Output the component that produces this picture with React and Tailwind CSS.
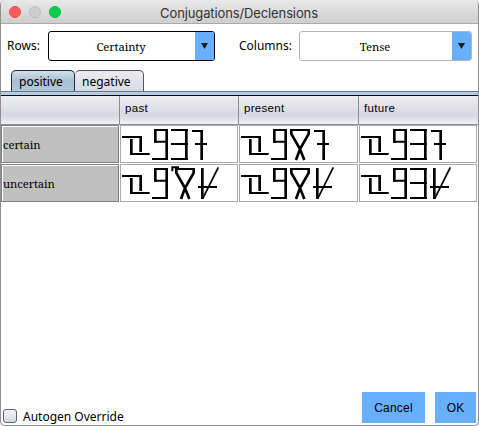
import React from 'react';

// Glyphs are drawn at three units per pixel, relative to their cell.
function Stem() {
  return (
    <g>
      <path d="M6 36H66M30 87H89" strokeWidth="6" />
      <path d="M34 42V90M62 33V81" strokeWidth="8" />
    </g>
  );
}
function Nine() {
  return (
    <g>
      <path d="M102 15H144M102 50H144M96 102H144" strokeWidth="6" />
      <path d="M106 12V53M140 12V105" strokeWidth="8" />
    </g>
  );
}
function Three() {
  return (
    <g>
      <path d="M153 15H204M153 57H204M153 102H204" strokeWidth="6" />
      <path d="M199 12V105" strokeWidth="8" />
    </g>
  );
}
function Ex({ x }) {
  return (
    <g transform={`translate(${x} 0)`}>
      <path d="M0 15H60" strokeWidth="6" />
      <path d="M4 13V27L30 72L43 105M56 13V27L30 72L18 105" strokeWidth="8" />
    </g>
  );
}
function Seven({ x }) {
  return (
    <g transform={`translate(${x} 0)`}>
      <path d="M-29 18H4M-20 57H16" strokeWidth="6" />
      <path d="M0 15V105" strokeWidth="8" />
    </g>
  );
}
function Slash({ x }) {
  return (
    <g transform={`translate(${x} 0)`}>
      <path d="M0 12V105" strokeWidth="8" />
      <path d="M-13 69H44" strokeWidth="6" />
      <path d="M1 104L48 10" strokeWidth="5" />
    </g>
  );
}

function Cell({ children }) {
  return (
    <div className="h-[38px] border border-[#aaaaaa] bg-white">
      <svg viewBox="3 3 348 108" preserveAspectRatio="xMinYMin meet" className="block h-9 w-[116px]" fill="none" stroke="#000">
        <Stem />
        <Nine />
        {children}
      </svg>
    </div>
  );
}

function RowHead({ children }) {
  return (
    <div className="flex h-[38px] items-center border border-[#808080] bg-[#c0c0c0] pt-[3px] pl-px font-['Noto_Serif','DejaVu_Serif',serif] text-[11.3px] tracking-[-0.1px] shadow-[inset_1px_1px_0_#fff]">
      {children}
    </div>
  );
}

function Combo({ children, className, arrow }) {
  return (
    <div className={`flex h-[30px] overflow-hidden rounded-[3px] border bg-white ${className}`}>
      <div className="flex-1 pt-[8px] pr-[2px] text-center font-['Noto_Serif','DejaVu_Serif',serif] text-[11.3px] leading-[14px] tracking-[-0.1px]">
        {children}
      </div>
      <div className={`flex items-center justify-center bg-[#66b0ff] ${arrow}`}>
        <svg width="7" height="6" viewBox="0 0 7 6"><path d="M0 0H7L3.5 6Z" fill="#1b1b1b" /></svg>
      </div>
    </div>
  );
}

function Header({ children }) {
  return <div className="border-l border-[#8a8d92] pt-[5px] pl-[5px]">{children}</div>;
}

export default function App() {
  return (
    <div className="h-[426px] w-[479px] bg-[#f2f2f2] text-black">
      <div className="flex h-full flex-col overflow-hidden rounded-[5px] border-b border-l border-r border-[#8f8f8f] bg-white font-['Noto_Sans',sans-serif] text-[12px]">
        <div className="grid h-6 shrink-0 grid-cols-[60px_1fr_60px] border-b border-[#acacac] bg-linear-to-b from-[#e9e9e9] to-[#cecece] pt-px">
          <div className="flex items-center gap-2 pl-2">
            <i className="size-3 rounded-full border border-[#ed4d4c] bg-[#ff5b59]" />
            <i className="size-3 rounded-full border border-[#bcbcbc] bg-[#cecece]" />
            <i className="size-3 rounded-full border border-[#09b943] bg-[#0ace4d]" />
          </div>
          <div className="pt-[3px] pr-px text-center font-[Inter] text-[13px] leading-[18px] tracking-[-0.12px] whitespace-nowrap text-[#333]">
            Conjugations/Declensions
          </div>
        </div>

        <div className="flex h-[46px] shrink-0 pt-[7px]">
          <div className="w-[47px] pt-[7px] pl-[6px] leading-4">Rows:</div>
          <Combo className="w-[167px] border-black" arrow="w-[19px]">Certainty</Combo>
          <div className="w-[84px] pt-[7px] pl-[24px] leading-4">Columns:</div>
          <Combo className="w-[173px] border-[#b5b5b5]" arrow="w-[19px]">Tense</Combo>
        </div>

        <div className="flex h-[21px] shrink-0 pl-[10px]">
          <div className="w-[64px] rounded-t-[5px] border border-b-0 border-[#202f45] bg-linear-to-b from-[#d3e0e9] via-[#a9c0d1] to-[#b2c9da] pt-[3px] pl-[7px] leading-4">
            positive
          </div>
          <div className="w-[69px] rounded-t-[5px] border border-b-0 border-l-0 border-[#4d5360] bg-linear-to-b from-[#ececef] to-[#d9dbe1] pt-[3px] pl-[7px] leading-4">
            negative
          </div>
        </div>
        <div className="h-[5px] shrink-0 border-t border-b border-t-[#66788a] border-b-[#050b1d] bg-[#b5cee1]" />

        <div className="grid h-[29px] shrink-0 grid-cols-[118px_119px_120px_120px] border-b border-[#8a929c] bg-linear-to-b from-[#eeeef1] via-[#d7d9e0] via-70% to-[#edf2fb] font-['Liberation_Sans',sans-serif] text-[11.5px] leading-[14px] tracking-[0.3px]">
          <div />
          <Header>past</Header>
          <Header>present</Header>
          <Header>future</Header>
        </div>

        <div className="grid shrink-0 grid-cols-[118px_118px_119px_118px] gap-x-px gap-y-px">
          <RowHead>certain</RowHead>
          <Cell><Three /><Seven x={245} /></Cell>
          <Cell><Ex x={153} /><Seven x={254} /></Cell>
          <Cell><Three /><Seven x={245} /></Cell>
          <RowHead>uncertain</RowHead>
          <Cell>
            <path d="M157 22V10H177" strokeWidth="6" />
            <Ex x={165} />
            <Slash x={247} />
          </Cell>
          <Cell><Ex x={153} /><Slash x={235} /></Cell>
          <Cell><Three /><Slash x={226} /></Cell>
        </div>

        <div className="mt-auto flex h-[33px] shrink-0 pr-[2px]">
          <div className="mt-[17px] ml-[2px] size-[14px] rounded-[3px] border border-[#5f636b] bg-linear-to-b from-[#f5f5f8] to-[#d6d8df]" />
          <div className="h-[33px] pt-[17px] pl-[6px] leading-4">Autogen Override</div>
          <div className="ml-auto flex gap-[10px] font-['Liberation_Sans',sans-serif] text-[12px]">
            <button className="h-[31px] w-[63px] bg-[#66b0ff] pt-px tracking-[0.2px]">Cancel</button>
            <button className="h-[31px] w-[41px] bg-[#66b0ff] pt-px">OK</button>
          </div>
        </div>
      </div>
    </div>
  );
}
